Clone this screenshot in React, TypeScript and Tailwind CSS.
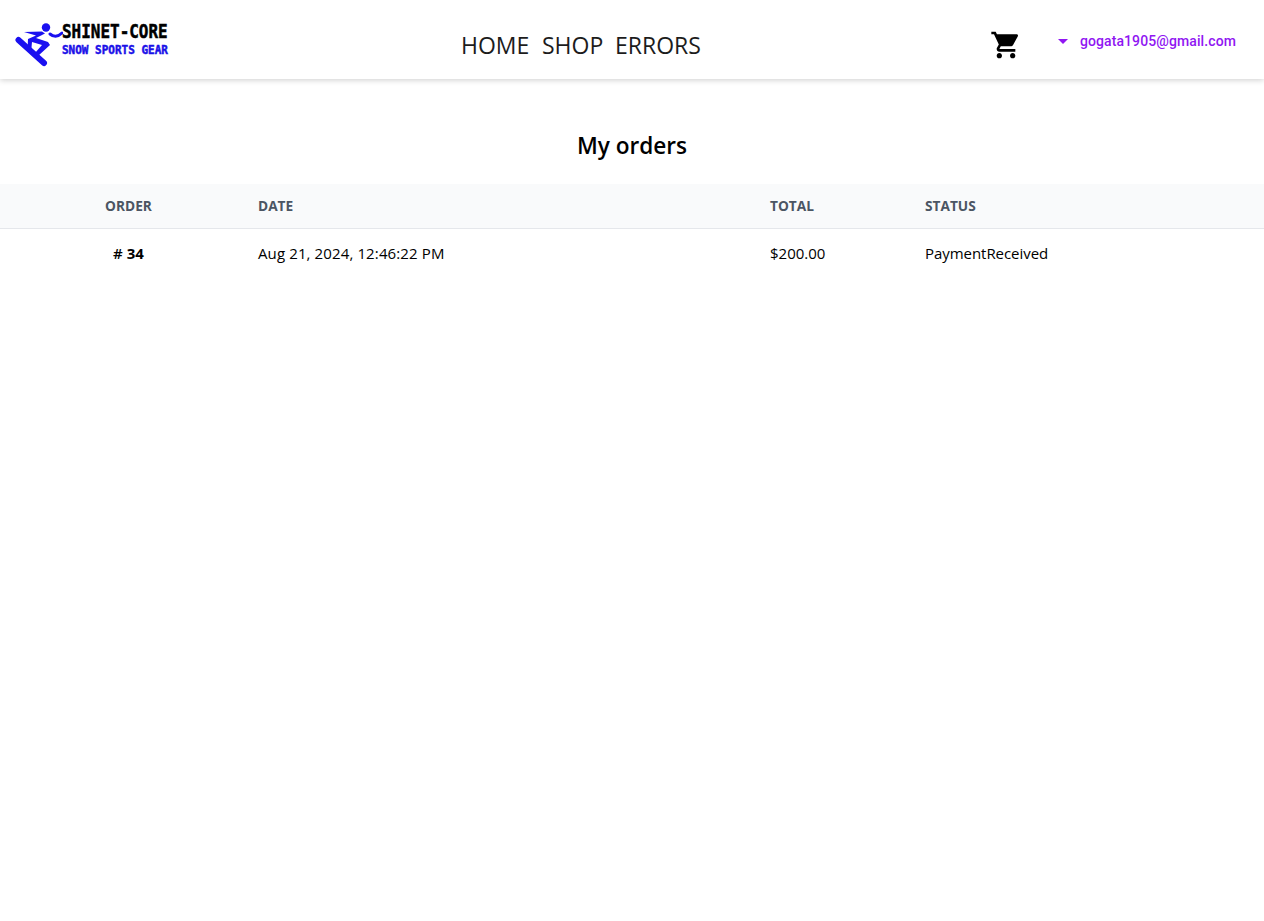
export default function App() {
  const f = { fontFamily: '"Open Sans", sans-serif' };
  return (
    <div className="min-h-[921px] bg-white text-black font-['Open_Sans',sans-serif]">
      <header className="relative h-[79px] bg-white shadow-[0_1px_6px_rgba(0,0,0,0.2)] flex items-start">
        <div className="w-[461px] shrink-0 pl-[15px] pt-[22px] flex">
          <svg width="48" height="45" viewBox="0 0 48 45" className="shrink-0">
            <g fill="#1a10f0" stroke="#1a10f0">
              <circle cx="31" cy="5.5" r="4.2" stroke="none" />
              <path d="M3.5 18 L29 41" strokeWidth="6" strokeLinecap="round" fill="none" />
              <path d="M9 10 L27 9.5 L30 11.5 L21 16 L33 20 L35 23 L23 34 L20 31 L27 23 L17 20 L16 31 L12.5 28 L13 17 L21 13.5 Z" stroke="none" />
              <path d="M35 12 Q41 17 47 11" strokeWidth="3" fill="none" strokeLinecap="round" />
            </g>
          </svg>
          <div className="-ml-[1px] flex flex-col font-['DejaVu_Sans_Mono',monospace] font-bold leading-none">
            <span className="text-[19px] h-[22px] text-black scale-x-[0.84] origin-left whitespace-nowrap [-webkit-text-stroke:0.5px_#000]">SHINET-CORE</span>
            <span className="text-[12.5px] text-[#1a10e8] scale-x-[0.88] origin-left whitespace-nowrap [-webkit-text-stroke:0.5px_#1a10e8]">SNOW SPORTS GEAR</span>
          </div>
        </div>
        <nav className="flex text-[23px] leading-[32px] pt-[29px] text-[#1c1c1c]" style={f}>
          <span className="w-[69px] mr-3">HOME</span>
          <span className="w-[61px] mr-3">SHOP</span>
          <span>ERRORS</span>
        </nav>
        <div className="ml-auto flex items-start">
          <svg width="32" height="32" viewBox="0 0 24 24" className="mt-[29px]" fill="#000">
            <path d="M7 18c-1.1 0-1.99.9-1.99 2S5.9 22 7 22s2-.9 2-2-.9-2-2-2zM1 2v2h2l3.6 7.59-1.35 2.45c-.16.28-.25.61-.25.96 0 1.1.9 2 2 2h12v-2H7.42c-.14 0-.25-.11-.25-.25l.03-.12.9-1.63h7.45c.75 0 1.41-.41 1.75-1.03l3.58-6.49c.08-.14.12-.31.12-.48 0-.55-.45-1-1-1H5.21l-.94-2H1zm16 16c-1.1 0-1.99.9-1.99 2s.89 2 1.99 2 2-.9 2-2-.9-2-2-2z" />
          </svg>
          <div className="ml-[36px] mr-[28px] pt-[31px] flex items-center text-[#9016f2] font-['Roboto',sans-serif] font-medium text-[14px] tracking-[0.1px] leading-[20px]">
            <span className="w-0 h-0 border-x-[5px] border-x-transparent border-t-[5px] border-t-[#9016f2] mr-[12px]" />
            <span>gogata1905@gmail.com</span>
          </div>
        </div>
      </header>
      <h1 className="text-center text-[22.6px] font-semibold leading-[32px] pt-[51px] pb-[22px]">My orders</h1>
      <div className="text-[15px]">
        <div className="grid grid-cols-[234px_512px_155px_1fr] bg-[#f9fafb] border-b border-[#e5e7eb] h-[45px] items-center text-[13.7px] font-bold text-[#4b5563]">
          <div className="pl-[23px] text-center">ORDER</div>
          <div className="px-6">DATE</div>
          <div className="px-6">TOTAL</div>
          <div className="px-6">STATUS</div>
        </div>
        <div className="grid grid-cols-[234px_512px_155px_1fr] h-[48px] items-center">
          <div className="pl-[23px] text-center font-bold">
            <span className="font-semibold">#</span> 34
          </div>
          <div className="px-6 tracking-[0.12px]">Aug 21, 2024, 12:46:22 PM</div>
          <div className="px-6">$200.00</div>
          <div className="px-6 tracking-[-0.05px]">PaymentReceived</div>
        </div>
      </div>
    </div>
  );
}
